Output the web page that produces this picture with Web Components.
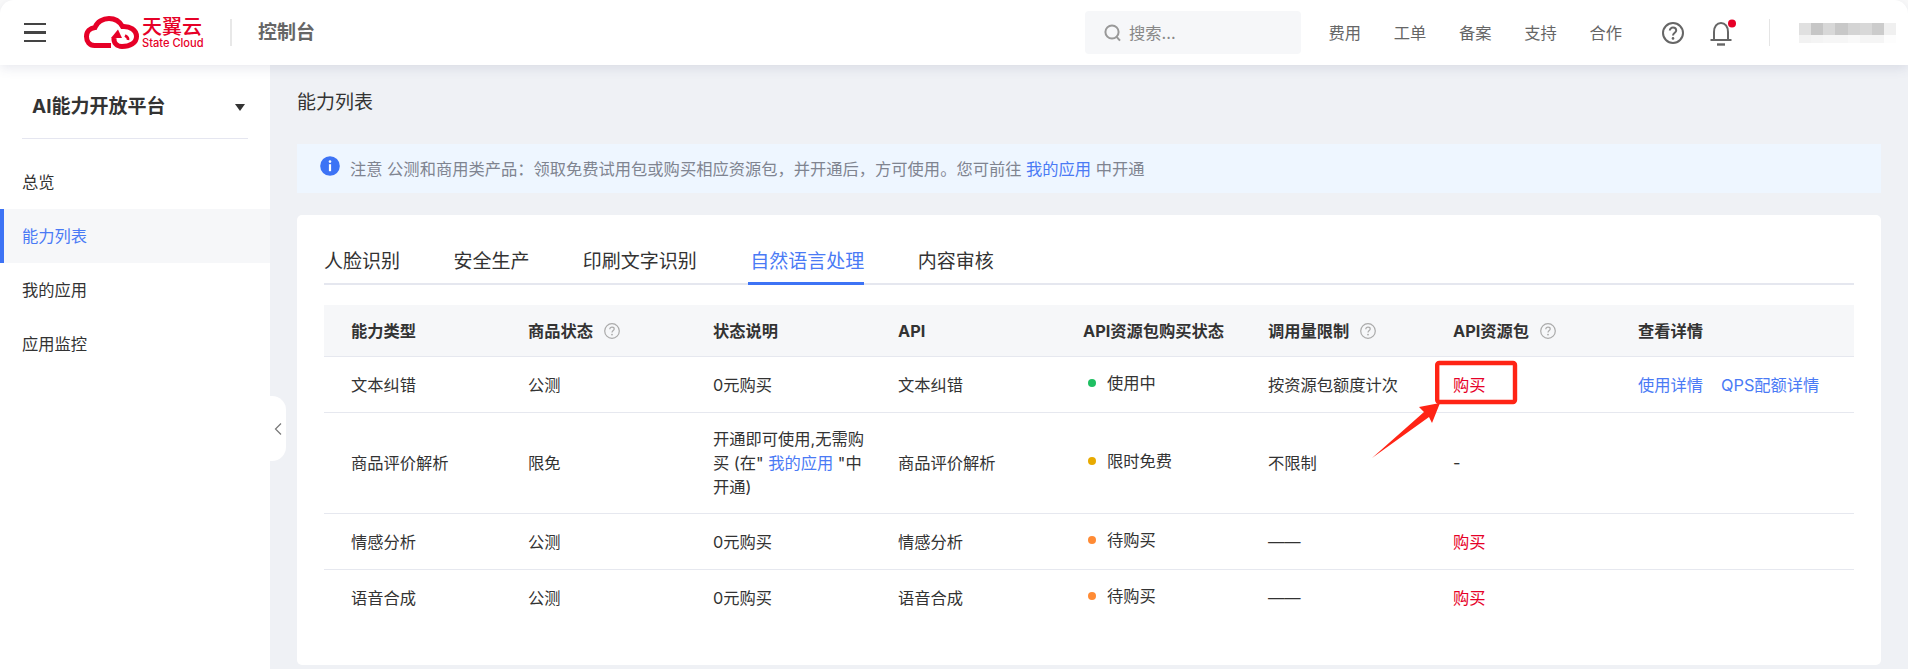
<!DOCTYPE html>
<html lang="zh">
<head>
<meta charset="utf-8">
<title>能力列表</title>
<style>
  html, body { margin: 0; height: 669px; overflow: hidden; background: #fafafa; }
  body { font: 16.27px/24px Inter, "Noto Sans CJK SC", sans-serif; color: #333; }
  a { color: #4a7af5; text-decoration: none; }
</style>
</head>
<body>
<app-shell>
  <top-bar slot="top"></top-bar>
  <side-nav slot="side" title-text="AI能力开放平台">
    <side-item>总览</side-item>
    <side-item active>能力列表</side-item>
    <side-item>我的应用</side-item>
    <side-item>应用监控</side-item>
  </side-nav>
  <page-title>能力列表</page-title>
  <notice-bar>注意 公测和商用类产品：领取免费试用包或购买相应资源包，并开通后，方可使用。您可前往 <a href="#">我的应用</a> 中开通</notice-bar>
  <content-card>
    <tab-bar>
      <tab-item>人脸识别</tab-item>
      <tab-item>安全生产</tab-item>
      <tab-item>印刷文字识别</tab-item>
      <tab-item active>自然语言处理</tab-item>
      <tab-item>内容审核</tab-item>
    </tab-bar>
    <cap-table>
      <cap-row head>
        <cap-cell>能力类型</cap-cell>
        <cap-cell>商品状态<help-mark></help-mark></cap-cell>
        <cap-cell>状态说明</cap-cell>
        <cap-cell>API</cap-cell>
        <cap-cell>API资源包购买状态</cap-cell>
        <cap-cell>调用量限制<help-mark></help-mark></cap-cell>
        <cap-cell>API资源包<help-mark></help-mark></cap-cell>
        <cap-cell>查看详情</cap-cell>
      </cap-row>
      <cap-row>
        <cap-cell>文本纠错</cap-cell>
        <cap-cell>公测</cap-cell>
        <cap-cell>0元购买</cap-cell>
        <cap-cell>文本纠错</cap-cell>
        <cap-cell><status-dot color="#1fbf62">使用中</status-dot></cap-cell>
        <cap-cell>按资源包额度计次</cap-cell>
        <cap-cell><buy-link>购买</buy-link></cap-cell>
        <cap-cell><a href="#">使用详情</a><a href="#" style="margin-left:18px">QPS配额详情</a></cap-cell>
      </cap-row>
      <cap-row>
        <cap-cell>商品评价解析</cap-cell>
        <cap-cell>限免</cap-cell>
        <cap-cell>开通即可使用,无需购<br>买 (在" <a href="#">我的应用</a> "中<br>开通)</cap-cell>
        <cap-cell>商品评价解析</cap-cell>
        <cap-cell><status-dot color="#e8aa00">限时免费</status-dot></cap-cell>
        <cap-cell>不限制</cap-cell>
        <cap-cell>-</cap-cell>
        <cap-cell></cap-cell>
      </cap-row>
      <cap-row>
        <cap-cell>情感分析</cap-cell>
        <cap-cell>公测</cap-cell>
        <cap-cell>0元购买</cap-cell>
        <cap-cell>情感分析</cap-cell>
        <cap-cell><status-dot color="#ff8b35">待购买</status-dot></cap-cell>
        <cap-cell>——</cap-cell>
        <cap-cell><buy-link>购买</buy-link></cap-cell>
        <cap-cell></cap-cell>
      </cap-row>
      <cap-row last>
        <cap-cell>语音合成</cap-cell>
        <cap-cell>公测</cap-cell>
        <cap-cell>0元购买</cap-cell>
        <cap-cell>语音合成</cap-cell>
        <cap-cell><status-dot color="#ff8b35">待购买</status-dot></cap-cell>
        <cap-cell>——</cap-cell>
        <cap-cell><buy-link>购买</buy-link></cap-cell>
        <cap-cell></cap-cell>
      </cap-row>
    </cap-table>
  </content-card>
</app-shell>

<script>
class AppShell extends HTMLElement {
  constructor() {
    super();
    this.attachShadow({ mode: 'open' }).innerHTML = `
      <style>
        :host { display: flex; flex-direction: column; height: 669px; position: relative; overflow: hidden; }
        .body { flex: 1; display: flex; min-height: 0; }
        main { flex: 1; background: #eff1f5; padding: 24px 27px 0; min-width: 0; }
        .grip {
          position: absolute; left: 270px; top: 396px; width: 16px; height: 65px;
          background: #fff; border-radius: 0 14px 14px 0;
          display: flex; align-items: center; justify-content: center;
        }
        .mark { position: absolute; left: 0; top: 0; pointer-events: none; }
      </style>
      <slot name="top"></slot>
      <div class="body">
        <slot name="side"></slot>
        <main><slot></slot></main>
      </div>
      <div class="grip">
        <svg width="10" height="14" viewBox="0 0 10 14" fill="none" stroke="#777" stroke-width="1.2"><path d="M8 1.5 2.5 7 8 12.5"/></svg>
      </div>
      <svg class="mark" width="1908" height="669">
        <rect x="1437.2" y="363" width="77.8" height="39" rx="2" fill="none" stroke="#ff2415" stroke-width="4.4"/>
        <polygon points="1372,458 1424,412 1419,407 1440,403 1432,423 1429,417" fill="#ff2415"/>
      </svg>`;
  }
}

class TopBar extends HTMLElement {
  constructor() {
    super();
    const nav = ['费用', '工单', '备案', '支持', '合作'].map(t => `<span>${t}</span>`).join('');
    const cols = [['#e0e0e0','#f2f2f2'],['#c6c6c6','#f4f4f4'],['#d8d8d8','#f6f6f6'],['#c8c8c8','#f6f6f6'],
      ['#d4d4d4','#f9f9f9'],['#d8d8d8','#f5f5f5'],['#cccccc','#f5f5f5'],['#f0f0f0','#fdfdfd']];
    const blur = cols.map(c => `<i style="background:${c[0]}"></i>`).join('') + cols.map(c => `<i style="background:${c[1]}"></i>`).join('');
    this.attachShadow({ mode: 'open' }).innerHTML = `
      <style>
        :host {
          display: flex; align-items: center; height: 65px; flex: none; background: #fff;
          border-radius: 14px 14px 0 0; position: relative; z-index: 2;
          box-shadow: 0 3px 12px rgba(70, 80, 120, .13); padding: 0 12px 0 24px; color: #666;
        }
        .burger { width: 22px; height: 19px; display: flex; flex-direction: column; justify-content: space-between; }
        .burger i { height: 2.4px; background: #444; display: block; }
        .logo { margin-left: 38px; display: flex; align-items: center; gap: 3px; }
        .words { width: 60px; color: #e60027; display: flex; flex-direction: column; }
        .cn { font-size: 20px; line-height: 21px; font-weight: 500; white-space: nowrap; }
        .en { font-size: 11.1px; line-height: 11px; font-weight: 500; white-space: nowrap; }
        .rule { width: 2px; height: 27px; background: #e8e8e8; flex: none; }
        .brand { font-size: 19px; font-weight: 700; color: #666; margin-left: 26px; }
        .search {
          margin-left: auto; width: 216px; height: 43px; box-sizing: border-box; padding-left: 19px;
          background: #f6f7f9; border-radius: 4px; display: flex; align-items: center; gap: 7px; color: #888;
        }
        .nav { display: flex; gap: 32.7px; margin-left: 27.6px; }
        .help { margin-left: 40px; display: block; }
        .bell { margin-left: 26px; display: block; }
        .bar { width: 1px; height: 27px; background: #e5e5e5; margin-left: 29px; }
        .blur { margin-left: 29px; width: 97px; height: 20px; display: grid; grid-template-columns: repeat(8, 1fr); grid-template-rows: 12px 8px; }
        .blur i { display: block; }
      </style>
      <div class="burger"><i></i><i></i><i></i></div>
      <div class="logo">
        <svg width="55" height="33" viewBox="0 0 55 33" fill="none" stroke="#e60027" stroke-width="5">
          <path d="M27 29.5H10.5C5.5 29.5 2.5 25.5 2.5 20.5C2.5 15.5 6 12 11 11.5C13 6 19 2.5 25 2.5C31 2.5 36 6 38.5 10.5C46 10 52.5 14 52.5 20.5C52.5 27 46 30.5 38 30.5C33 30.5 29.5 27 30 22"/>
          <path d="M41 19.5C43 20.5 44.5 22 44 24" stroke-width="2.6"/>
          <path d="M34 13.5 27 22 38 22Z" fill="#e60027" stroke="none"/>
        </svg>
        <div class="words"><span class="cn">天翼云</span><span class="en">State Cloud</span></div>
      </div>
      <div class="rule" style="margin-left:28px"></div>
      <div class="brand">控制台</div>
      <div class="search">
        <svg width="18" height="18" viewBox="0 0 18 18" fill="none" stroke="#999" stroke-width="2"><circle cx="8" cy="8" r="6.6"/><path d="M12.6 12.8 16 16.6"/></svg>
        <span>搜索...</span>
      </div>
      <div class="nav">${nav}</div>
      <svg class="help" width="22" height="22" viewBox="0 0 22 22" fill="none" stroke="#666" stroke-width="2">
        <circle cx="11" cy="11" r="10"/>
        <path d="M7.8 8.6C7.8 6.8 9.2 5.6 11 5.6C12.8 5.6 14.2 6.8 14.2 8.4C14.2 10.6 11 10.8 11 13.4"/>
        <circle cx="11" cy="16.4" r="1.3" fill="#666" stroke="none"/>
      </svg>
      <svg class="bell" width="30" height="28" viewBox="0 0 30 28" fill="none" stroke="#666" stroke-width="2">
        <path d="M4 21V13C4 7.5 7 4 11 4C15 4 18 7.5 18 13V21"/>
        <path d="M0.5 21H21.5"/>
        <path d="M7 25.5H15" stroke-width="2.4"/>
        <circle cx="22" cy="4.5" r="4" fill="#e60027" stroke="none"/>
      </svg>
      <div class="bar"></div>
      <div class="blur">${blur}</div>`;
  }
}

class SideNav extends HTMLElement {
  constructor() {
    super();
    this.attachShadow({ mode: 'open' }).innerHTML = `
      <style>
        :host { display: block; width: 270px; flex: none; background: #fff; position: relative; z-index: 1; }
        .title {
          height: 62px; margin: 11px 22px 0; padding: 0 3px 0 10px; display: flex; align-items: center;
          justify-content: space-between; border-bottom: 1.4px solid #e5e6f0; box-sizing: content-box;
        }
        .title b { font-size: 19px; font-weight: 700; }
        .title i { width: 0; height: 0; border: 5.5px solid transparent; border-top: 7px solid #333; border-bottom: 0; }
        .list { margin-top: 16px; }
      </style>
      <div class="title"><b>${this.getAttribute('title-text')}</b><i></i></div>
      <div class="list"><slot></slot></div>`;
  }
}

class SideItem extends HTMLElement {
  constructor() {
    super();
    this.attachShadow({ mode: 'open' }).innerHTML = `
      <style>
        :host { display: flex; align-items: center; height: 54px; padding-left: 22px; }
        :host([active]) { background: #f6f7f9; color: #4a7af5; box-shadow: inset 4px 0 0 #3d73f5; }
      </style>
      <slot></slot>`;
  }
}

class PageTitle extends HTMLElement {
  constructor() {
    super();
    this.attachShadow({ mode: 'open' }).innerHTML = `
      <style>:host { display: block; font-size: 19px; line-height: 28px; }</style>
      <slot></slot>`;
  }
}

class NoticeBar extends HTMLElement {
  constructor() {
    super();
    this.attachShadow({ mode: 'open' }).innerHTML = `
      <style>
        :host {
          display: flex; align-items: center; gap: 10px; height: 49px; margin-top: 27px; padding-left: 23px;
          background: #eef6ff; color: #7f8490;
        }
        svg { display: block; flex: none; margin-top: -5px; }
        span { margin-top: 1px; }
      </style>
      <svg width="20" height="20" viewBox="0 0 20 20">
        <circle cx="10" cy="10" r="9.8" fill="#3d73f5"/>
        <circle cx="10" cy="5.6" r="1.3" fill="#fff"/>
        <rect x="8.9" y="8.2" width="2.2" height="7" fill="#fff"/>
      </svg>
      <span><slot></slot></span>`;
  }
}

class ContentCard extends HTMLElement {
  constructor() {
    super();
    this.attachShadow({ mode: 'open' }).innerHTML = `
      <style>
        :host {
          display: block; height: 450px; box-sizing: border-box; margin-top: 22px; padding: 26px 27px 0;
          background: #fff; border-radius: 5px;
        }
      </style>
      <slot></slot>`;
  }
}

class TabBar extends HTMLElement {
  constructor() {
    super();
    this.attachShadow({ mode: 'open' }).innerHTML = `
      <style>
        :host { display: flex; gap: 53.4px; height: 42px; border-bottom: 2px solid #e5e7ef; }
      </style>
      <slot></slot>`;
  }
}

class TabItem extends HTMLElement {
  constructor() {
    super();
    this.attachShadow({ mode: 'open' }).innerHTML = `
      <style>
        :host { display: block; height: 41px; line-height: 41px; font-size: 19px; white-space: nowrap; }
        :host([active]) {
          color: #4a7af5; border-bottom: 3px solid #3d73f5;
          margin-left: -2px; padding-left: 2px;
        }
      </style>
      <slot></slot>`;
  }
}

class CapTable extends HTMLElement {
  constructor() {
    super();
    this.attachShadow({ mode: 'open' }).innerHTML = `
      <style>:host { display: block; margin-top: 20px; }</style>
      <slot></slot>`;
  }
}

class CapRow extends HTMLElement {
  constructor() {
    super();
    this.attachShadow({ mode: 'open' }).innerHTML = `
      <style>
        :host {
          display: grid; grid-template-columns: 177px repeat(6, 185px) 1fr; align-items: center;
          box-sizing: border-box; min-height: 56px; padding: 14px 0; border-bottom: 1px solid #e6e8ef;
        }
        :host([head]) { min-height: 52px; padding: 0; background: #f6f7f9; font-weight: 700; }
        :host([last]) { border-bottom: 0; }
      </style>
      <slot></slot>`;
  }
}

class CapCell extends HTMLElement {
  constructor() {
    super();
    this.attachShadow({ mode: 'open' }).innerHTML = `
      <style>:host { display: block; padding-left: 27px; white-space: nowrap; }</style>
      <slot></slot>`;
  }
}

class HelpMark extends HTMLElement {
  constructor() {
    super();
    this.attachShadow({ mode: 'open' }).innerHTML = `
      <style>
        :host { display: inline-block; margin-left: 11px; vertical-align: -2px; }
        svg { display: block; }
      </style>
      <svg width="16" height="16" viewBox="0 0 16 16" fill="none" stroke="#aaa" stroke-width="1.2">
        <circle cx="8" cy="8" r="7.3"/>
        <path d="M5.8 6.2C5.8 5 6.8 4.2 8 4.2C9.2 4.2 10.2 5 10.2 6C10.2 7.5 8 7.6 8 9.6"/>
        <circle cx="8" cy="11.6" r=".9" fill="#aaa" stroke="none"/>
      </svg>`;
  }
}

class StatusDot extends HTMLElement {
  constructor() {
    super();
    this.attachShadow({ mode: 'open' }).innerHTML = `
      <style>
        :host { display: flex; align-items: center; gap: 11px; margin: -2px 0 2px 5px; }
        i { width: 8px; height: 8px; border-radius: 50%; background: ${this.getAttribute('color')}; }
      </style>
      <i></i><span><slot></slot></span>`;
  }
}

class BuyLink extends HTMLElement {
  constructor() {
    super();
    this.attachShadow({ mode: 'open' }).innerHTML = `
      <style>:host { color: #e60027; }</style>
      <slot></slot>`;
  }
}

customElements.define('app-shell', AppShell);
customElements.define('top-bar', TopBar);
customElements.define('side-nav', SideNav);
customElements.define('side-item', SideItem);
customElements.define('page-title', PageTitle);
customElements.define('notice-bar', NoticeBar);
customElements.define('content-card', ContentCard);
customElements.define('tab-bar', TabBar);
customElements.define('tab-item', TabItem);
customElements.define('cap-table', CapTable);
customElements.define('cap-row', CapRow);
customElements.define('cap-cell', CapCell);
customElements.define('help-mark', HelpMark);
customElements.define('status-dot', StatusDot);
customElements.define('buy-link', BuyLink);
</script>
</body>
</html>
